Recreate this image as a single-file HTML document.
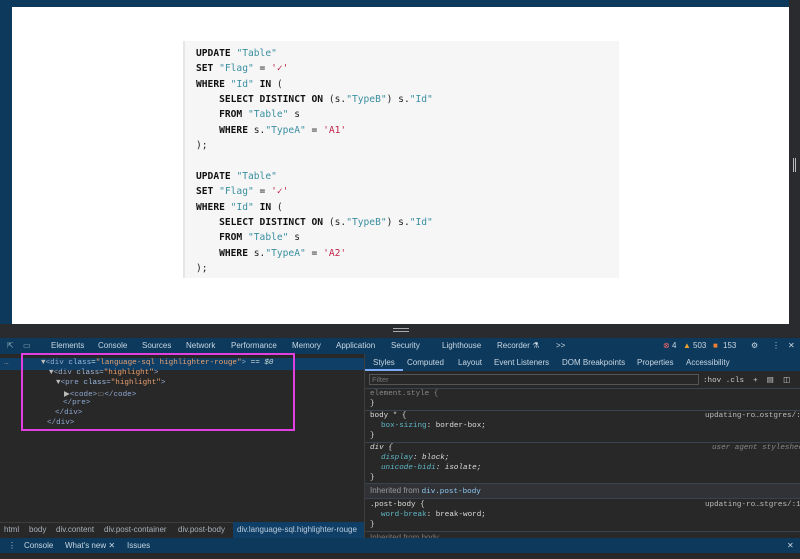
<!DOCTYPE html>
<html><head><meta charset="utf-8"><style>
*{box-sizing:border-box;margin:0;padding:0}
body{width:800px;height:559px;overflow:hidden;background:#0d3a5c;font-family:"Liberation Sans",sans-serif;position:relative}
.abs{position:absolute}
.page{left:12px;top:7px;width:777px;height:317px;background:#fff;overflow:hidden}
.rstrip{left:789px;top:0;width:11px;height:338px;background:#2a2b2e}
.bstrip{left:0;top:324px;width:800px;height:14px;background:#2a2b2e}
.code{left:171px;top:34px;width:436px;height:237px;background:#f6f6f6;border-left:2px solid #e6e6e6}
.pre{font-family:"DejaVu Sans Mono","Liberation Mono",monospace;font-size:9.6px;color:#222;position:absolute;left:11px;top:5px}
.pre div{height:15.36px;line-height:15.36px;white-space:pre;overflow:visible}
b{font-weight:bold;color:#111}
.s{color:#3a8fa0}.r{color:#c0244a}
.tabs{left:0;top:338px;width:800px;height:16px;background:#0d3a5c;color:#c9d6e2;font-size:8px;line-height:16px}
.tabs span{position:absolute;top:0}
.dom{left:0;top:354px;width:364px;height:168px;background:#282828}
.styles{left:364px;top:354px;width:436px;height:184px;background:#282828;border-left:1px solid #3d3d3d}
.mono{font-family:"Liberation Mono",monospace;font-size:7.6px}
.line{position:absolute;white-space:pre}
.crumb{left:0;top:522px;width:364px;height:16px;background:#282828;font-size:8px;color:#a8b0ba;line-height:16px}
.drawer{left:0;top:538px;width:800px;height:15px;background:#0d3a5c;color:#c9d6e2;font-size:8px;line-height:15px}
.sep{position:absolute;left:0;width:436px;height:1px;background:#3a4450}
</style></head><body>
<div class="abs rstrip"><div class="abs" style="left:4px;top:158px;width:1px;height:14px;background:#bbb"></div><div class="abs" style="left:6px;top:158px;width:1px;height:14px;background:#bbb"></div></div>
<div class="abs page">
<div class="abs code"><div class="pre">
<div><b>UPDATE</b> <span class="s">"Table"</span></div>
<div><b>SET</b> <span class="s">"Flag"</span> = <span class="r">'✓'</span></div>
<div><b>WHERE</b> <span class="s">"Id"</span> <b>IN</b> (</div>
<div>    <b>SELECT DISTINCT ON</b> (s.<span class="s">"TypeB"</span>) s.<span class="s">"Id"</span></div>
<div>    <b>FROM</b> <span class="s">"Table"</span> s</div>
<div>    <b>WHERE</b> s.<span class="s">"TypeA"</span> = <span class="r">'A1'</span></div>
<div>);</div>
<div> </div>
<div><b>UPDATE</b> <span class="s">"Table"</span></div>
<div><b>SET</b> <span class="s">"Flag"</span> = <span class="r">'✓'</span></div>
<div><b>WHERE</b> <span class="s">"Id"</span> <b>IN</b> (</div>
<div>    <b>SELECT DISTINCT ON</b> (s.<span class="s">"TypeB"</span>) s.<span class="s">"Id"</span></div>
<div>    <b>FROM</b> <span class="s">"Table"</span> s</div>
<div>    <b>WHERE</b> s.<span class="s">"TypeA"</span> = <span class="r">'A2'</span></div>
<div>);</div>
</div></div>
</div>
<div class="abs bstrip"><div class="abs" style="left:393px;top:4px;width:16px;height:1px;background:#aaa"></div><div class="abs" style="left:393px;top:7px;width:16px;height:1px;background:#aaa"></div></div>
<div class="abs tabs">
<span style="left:7px;color:#8ab">⇱</span><span style="left:23px;color:#8ab">▭</span>
<span style="left:51px">Elements</span><span style="left:98px">Console</span><span style="left:142px">Sources</span><span style="left:186px">Network</span><span style="left:231px">Performance</span><span style="left:292px">Memory</span><span style="left:336px">Application</span><span style="left:391px">Security</span><span style="left:442px">Lighthouse</span><span style="left:497px">Recorder ⚗</span><span style="left:556px">&gt;&gt;</span>
<span style="left:663px;color:#e66">⊗</span><span style="left:672px">4</span><span style="left:683px;color:#f0a030">▲</span><span style="left:693px">503</span><span style="left:713px;color:#f08030">■</span><span style="left:723px">153</span><span style="left:751px">⚙</span><span style="left:772px">⋮</span><span style="left:788px">✕</span>
</div>
<div class="abs dom mono">
<div class="abs" style="left:0;top:4px;width:364px;height:12px;background:#0f3f66"></div>
<div class="line" style="left:4px;top:5px;color:#aaa">…</div>
<div class="line" style="left:41px;top:5px;color:#cdd"><span style="color:#bbb">▼</span><span style="color:#8fa8d0">&lt;div</span> <span style="color:#9bb8e0">class</span>=<span style="color:#e8a070">"language-sql highlighter-rouge"</span><span style="color:#8fa8d0">&gt;</span> == <i>$0</i></div>
<div class="line" style="left:49px;top:15px;color:#8fa8d0"><span style="color:#bbb">▼</span>&lt;div <span style="color:#9bb8e0">class</span>=<span style="color:#e8a070">"highlight"</span>&gt;</div>
<div class="line" style="left:56px;top:25px;color:#8fa8d0"><span style="color:#bbb">▼</span>&lt;pre <span style="color:#9bb8e0">class</span>=<span style="color:#e8a070">"highlight"</span>&gt;</div>
<div class="line" style="left:64px;top:35px;color:#8fa8d0"><span style="color:#bbb">▶</span>&lt;code&gt;<span style="color:#777">▭</span>&lt;/code&gt;</div>
<div class="line" style="left:63px;top:45px;color:#8fa8d0">&lt;/pre&gt;</div>
<div class="line" style="left:55px;top:55px;color:#8fa8d0">&lt;/div&gt;</div>
<div class="line" style="left:47px;top:65px;color:#8fa8d0">&lt;/div&gt;</div>
<div class="abs" style="left:21px;top:-1px;width:274px;height:78px;border:2px solid #e040e0"></div>
</div>
<div class="abs styles">
<div class="abs" style="left:0;top:0;width:436px;height:17px;background:#0d3a5c;color:#c9d6e2;font-size:8px;line-height:17px">
<span class="abs" style="left:8px">Styles</span><span class="abs" style="left:42px">Computed</span><span class="abs" style="left:93px">Layout</span><span class="abs" style="left:129px">Event Listeners</span><span class="abs" style="left:197px">DOM Breakpoints</span><span class="abs" style="left:272px">Properties</span><span class="abs" style="left:321px">Accessibility</span>
<div class="abs" style="left:0;top:15px;width:38px;height:2px;background:#7cacf8"></div></div>
<div class="abs" style="left:4px;top:20px;width:330px;height:11px;border:1px solid #555;color:#777;font-size:7.5px;line-height:9px;padding-left:2px">Filter</div>
<div class="line mono" style="left:338px;top:21px;color:#ccc">:hov .cls  +  ▤  ◫</div>
<div class="sep" style="top:34px"></div>
<div class="mono" style="color:#ddd">
<div class="line" style="left:5px;top:36px;color:#888">element.style {</div>
<div class="line" style="left:5px;top:46px">}</div>
<div class="sep" style="top:56px"></div>
<div class="line" style="left:5px;top:58px">body * {</div><div class="line" style="left:340px;top:58px;color:#bbb">updating-ro…ostgres/:35</div>
<div class="line" style="left:16px;top:68px"><span style="color:#5fb8c8">box-sizing</span>: border-box;</div>
<div class="line" style="left:5px;top:78px">}</div>
<div class="sep" style="top:88px"></div>
<div class="line" style="left:5px;top:90px;font-style:italic">div {</div><div class="line" style="left:347px;top:90px;color:#888;font-style:italic">user agent stylesheet</div>
<div class="line" style="left:16px;top:100px;font-style:italic"><span style="color:#5fb8c8">display</span>: block;</div>
<div class="line" style="left:16px;top:110px;font-style:italic"><span style="color:#5fb8c8">unicode-bidi</span>: isolate;</div>
<div class="line" style="left:5px;top:120px">}</div>
<div class="abs" style="left:0;top:129px;width:436px;height:16px;background:#303236;border-top:1px solid #3a4450;border-bottom:1px solid #3a4450"></div>
<div class="line" style="left:5px;top:132px;font-family:'Liberation Sans';font-size:8px;color:#999">Inherited from <span class="mono" style="color:#8ec8f0">div.post-body</span></div>
<div class="line" style="left:5px;top:147px">.post-body {</div><div class="line" style="left:340px;top:147px;color:#bbb">updating-ro…stgres/:146</div>
<div class="line" style="left:16px;top:157px"><span style="color:#5fb8c8">word-break</span>: break-word;</div>
<div class="line" style="left:5px;top:167px">}</div>
<div class="sep" style="top:177px"></div>
<div class="line" style="left:5px;top:179px;color:#777;font-family:'Liberation Sans';font-size:8px">Inherited from body</div>
</div></div>
<div class="abs crumb"><div class="abs" style="left:0;top:0;width:364px;height:1px;background:#3d3d3d"></div>
<span class="abs" style="left:4px">html</span><span class="abs" style="left:29px">body</span><span class="abs" style="left:56px">div.content</span><span class="abs" style="left:104px">div.post-container</span><span class="abs" style="left:178px">div.post-body</span><span class="abs" style="left:233px;width:131px;background:#0f3f66;color:#bcd;padding-left:4px">div.language-sql.highlighter-rouge</span></div>
<div class="abs drawer"><span class="abs" style="left:8px">⋮</span><span class="abs" style="left:24px">Console</span><span class="abs" style="left:65px">What's new ✕</span><span class="abs" style="left:127px">Issues</span><span class="abs" style="left:787px">✕</span></div>
<div class="abs" style="left:0;top:553px;width:800px;height:6px;background:#282828"></div>
</body></html>
